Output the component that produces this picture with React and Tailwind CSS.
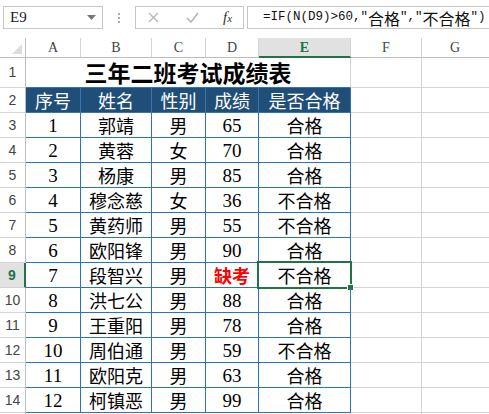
const CJK = { fontFamily: '"Noto Sans CJK SC", sans-serif' };
const NUM = { fontFamily: '"Liberation Serif", "Noto Sans CJK SC", serif' };
const MONO = { fontFamily: '"Liberation Mono", monospace' };

const rows = [
  [1, "郭靖", "男", "65", "合格"],
  [2, "黄蓉", "女", "70", "合格"],
  [3, "杨康", "男", "85", "合格"],
  [4, "穆念慈", "女", "36", "不合格"],
  [5, "黄药师", "男", "55", "不合格"],
  [6, "欧阳锋", "男", "90", "合格"],
  [7, "段智兴", "男", "缺考", "不合格"],
  [8, "洪七公", "男", "88", "合格"],
  [9, "王重阳", "男", "78", "合格"],
  [10, "周伯通", "男", "59", "不合格"],
  [11, "欧阳克", "男", "63", "合格"],
  [12, "柯镇恶", "男", "99", "合格"],
];

function RowHead({ n, active }) {
  return (
    <div
      className={
        active
          ? "w-[26px] shrink-0 flex items-center justify-center border-b border-[#d4d4d4] border-r-2 border-r-[#217346] bg-[#e1e1e1] text-[14px] font-bold text-[#217346]"
          : "w-[26px] shrink-0 flex items-center justify-center border-b border-r border-[#d4d4d4] border-r-[#bcbcbc] text-[14px] text-[#444]"
      }
      style={{ fontFamily: '"Liberation Sans", sans-serif' }}
    >
      {n}
    </div>
  );
}

function Blank() {
  return (
    <>
      <div className="w-[71px] shrink-0 border-r border-b border-[#d4d4d4]" />
      <div className="flex-1 border-b border-[#d4d4d4]" />
    </>
  );
}

function Cell({ className, children, style }) {
  return (
    <div
      className={"shrink-0 flex items-center justify-center border-r border-b border-[#2a75c0] leading-none " + className}
      style={style}
    >
      {children}
    </div>
  );
}

export default function App() {
  return (
    <div className="w-[489px] h-[414px] overflow-hidden bg-white text-black select-none">
      {/* formula bar */}
      <div className="h-[38px] flex items-start pt-[6px]">
        <div className="ml-[3px] w-[100px] h-[23px] border border-[#c6c6c6] flex items-center justify-between px-[6px]">
          <span className="text-[15px] text-[#222]" style={NUM}>E9</span>
          <svg width="9" height="5" viewBox="0 0 9 5"><path d="M0 0h9L4.5 5z" fill="#777" /></svg>
        </div>
        <div className="w-[32px] h-[23px] flex flex-col items-center justify-center gap-[2px]">
          <span className="w-[2px] h-[2px] bg-[#aaa]" />
          <span className="w-[2px] h-[2px] bg-[#aaa]" />
          <span className="w-[2px] h-[2px] bg-[#aaa]" />
        </div>
        <div className="w-[109px] h-[23px] border border-[#c6c6c6] flex items-center">
          <svg className="ml-[12px]" width="11" height="11" viewBox="0 0 11 11">
            <path d="M1 1l9 9M10 1l-9 9" stroke="#b5b5b5" strokeWidth="1.3" />
          </svg>
          <svg className="ml-[27px]" width="13" height="11" viewBox="0 0 13 11">
            <path d="M1 6l4 4 7-9" stroke="#b5b5b5" strokeWidth="1.6" fill="none" />
          </svg>
          <span className="ml-[24px] text-[15px] italic text-[#333]" style={{ fontFamily: '"Liberation Serif", serif' }}>
            f<span className="text-[11px]">x</span>
          </span>
        </div>
        <div className="ml-[3px] flex-1 h-[23px] border border-r-0 border-[#c6c6c6] flex items-center pl-[15px] whitespace-nowrap overflow-hidden text-[#111]">
          <span className="text-[12.5px]" style={MONO}>=IF(N(D9)&gt;60,"</span>
          <span className="text-[16px]" style={CJK}>合格</span>
          <span className="text-[12.5px]" style={MONO}>","</span>
          <span className="text-[16px]" style={CJK}>不合格</span>
          <span className="text-[12.5px]" style={MONO}>")</span>
        </div>
      </div>

      {/* column headers */}
      <div className="flex h-[20px] text-[14px] text-[#444]" style={NUM}>
        <div className="w-[26px] shrink-0 border-r border-b border-[#bcbcbc] flex items-end justify-end p-[3px]">
          <svg width="10" height="10" viewBox="0 0 10 10"><path d="M10 0v10H0z" fill="#dcdcdc" /></svg>
        </div>
        <div className="w-[55px] shrink-0 border-r border-b border-[#d4d4d4] border-b-[#bcbcbc] flex items-center justify-center">A</div>
        <div className="w-[71px] shrink-0 border-r border-b border-[#d4d4d4] border-b-[#bcbcbc] flex items-center justify-center">B</div>
        <div className="w-[54px] shrink-0 border-r border-b border-[#d4d4d4] border-b-[#bcbcbc] flex items-center justify-center">C</div>
        <div className="w-[53px] shrink-0 border-r border-b border-[#d4d4d4] border-b-[#bcbcbc] flex items-center justify-center">D</div>
        <div className="w-[92px] shrink-0 border-r border-[#d4d4d4] border-b-2 border-b-[#217346] bg-[#e1e1e1] flex items-center justify-center font-bold text-[#217346]">E</div>
        <div className="w-[71px] shrink-0 border-r border-b border-[#d4d4d4] border-b-[#bcbcbc] flex items-center justify-center">F</div>
        <div className="flex-1 border-b border-[#bcbcbc] flex items-center justify-center pr-[1px]">G</div>
      </div>

      {/* row 1: title */}
      <div className="flex h-[30px]">
        <RowHead n={1} />
        <div className="w-[325px] shrink-0 border-r border-[#d4d4d4] border-b border-b-[#2a75c0] flex items-center justify-center text-[23px] font-bold leading-none" style={CJK}>
          三年二班考试成绩表
        </div>
        <Blank />
      </div>

      {/* row 2: header */}
      <div className="flex h-[25px] text-white text-[18px]" style={CJK}>
        <RowHead n={2} />
        <Cell className="w-[55px] bg-[#1f4e79] border-[#3a73ad]">序号</Cell>
        <Cell className="w-[71px] bg-[#1f4e79] border-[#3a73ad]">姓名</Cell>
        <Cell className="w-[54px] bg-[#1f4e79] border-[#3a73ad]">性别</Cell>
        <Cell className="w-[53px] bg-[#1f4e79] border-[#3a73ad]">成绩</Cell>
        <Cell className="w-[92px] bg-[#1f4e79] border-[#2a75c0]">是否合格</Cell>
        <Blank />
      </div>

      {rows.map((r, i) => {
        const sel = i === 6;
        return (
          <div key={i} className="flex h-[25px] text-[18px]" style={CJK}>
            <RowHead n={i + 3} active={sel} />
            <Cell className="w-[55px] text-[19px]" style={NUM}>{r[0]}</Cell>
            <Cell className="w-[71px]">{r[1]}</Cell>
            <Cell className="w-[54px]">{r[2]}</Cell>
            {r[3] === "缺考" ? (
              <Cell className="w-[53px] font-bold text-[#ff0000]">{r[3]}</Cell>
            ) : (
              <Cell className="w-[53px] text-[19px]" style={NUM}>{r[3]}</Cell>
            )}
            <Cell className="w-[92px] relative">
              {r[4]}
              {sel && (
                <div className="absolute left-[-2px] top-[-2px] w-[95px] h-[28px] border-2 border-[#217346]">
                  <div className="absolute right-[-4px] bottom-[-4px] w-[7px] h-[7px] bg-[#217346] border border-white" />
                </div>
              )}
            </Cell>
            <Blank />
          </div>
        );
      })}

      <div className="flex h-[25px]">
        <RowHead n="" />
        <div className="w-[325px] shrink-0 border-r border-[#d4d4d4]" />
        <Blank />
      </div>
    </div>
  );
}
